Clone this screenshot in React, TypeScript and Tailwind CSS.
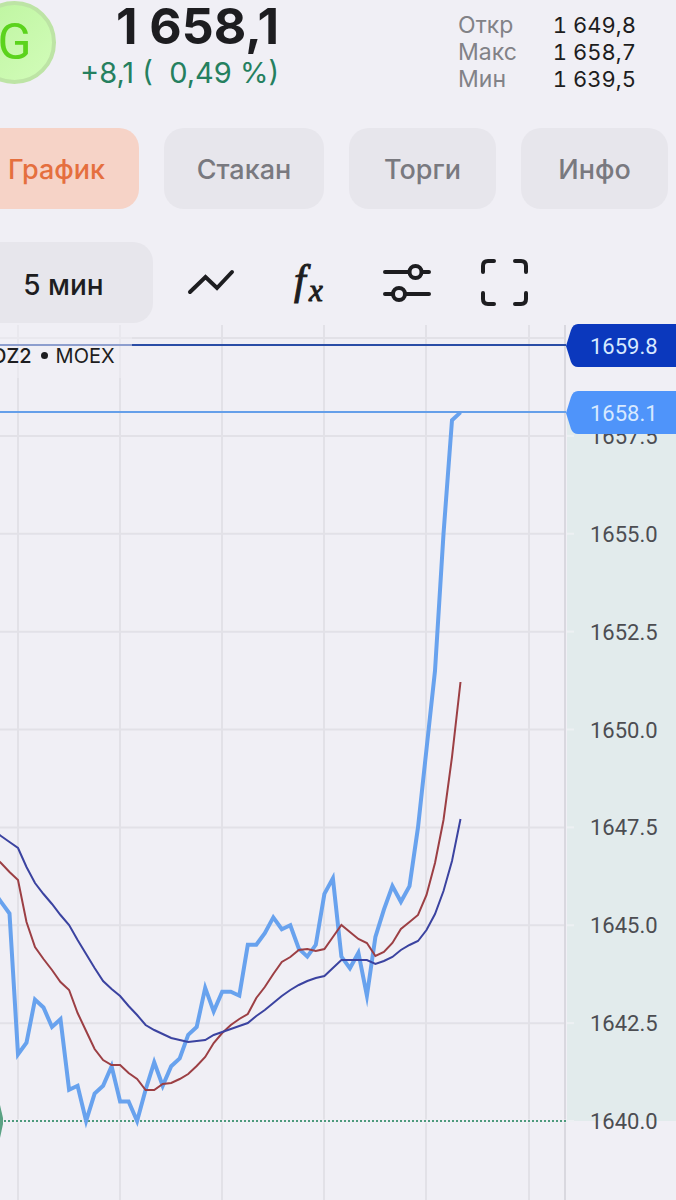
import clsx from "clsx";

const TABS = [
  { label: "График", width: "w-[165px]", active: true },
  { label: "Стакан", width: "w-[160px]" },
  { label: "Торги", width: "w-[147px]" },
  { label: "Инфо", width: "w-[147px]" },
];

const DAY_STATS = [
  { label: "Откр", value: "1 649,8" },
  { label: "Макс", value: "1 658,7" },
  { label: "Мин", value: "1 639,5" },
];

const PRICE_TICKS = [1657.5, 1655, 1652.5, 1650, 1647.5, 1645, 1642.5, 1640];
const TIME_TICKS = [18, 120, 222, 324, 426, 529];

// 5 minute closes
const CLOSES = [
  1645.9, 1645.6, 1645.3, 1641.7, 1642.0, 1643.1, 1642.9, 1642.4, 1642.6, 1640.8, 1640.9, 1640.0,
  1640.7, 1640.9, 1641.4, 1640.5, 1640.5, 1640.0, 1640.8, 1641.5, 1640.9, 1641.4, 1641.6, 1642.2,
  1642.4, 1643.4, 1642.8, 1643.3, 1643.3, 1643.2, 1644.5, 1644.5, 1644.8, 1645.2, 1644.9, 1645.0,
  1644.4, 1644.2, 1644.5, 1645.8, 1646.2, 1644.2, 1643.9, 1644.3, 1643.2, 1644.7, 1645.4, 1646.0,
  1645.6, 1646.0, 1647.5, 1649.5, 1651.5, 1655.0, 1657.9, 1658.1,
];

// Moving averages, already in chart coordinates
const FAST_MA = [
  855, 863, 872, 880, 922, 947, 959, 970, 982, 990, 1013, 1031, 1049, 1060, 1065, 1065, 1073, 1079,
  1090, 1090, 1084, 1083, 1079, 1074, 1066, 1057, 1043, 1033, 1025, 1019, 1014, 998, 987, 974, 962,
  957, 950, 949, 951, 949, 937, 925, 932, 939, 943, 956, 952, 943, 929, 922, 915, 895, 863, 820,
  757, 682,
];
const SLOW_MA = [
  830, 836, 842, 848, 867, 883, 894, 904, 915, 925, 940, 954, 968, 981, 989, 996, 1006, 1015, 1025,
  1030, 1034, 1038, 1040, 1042, 1041, 1040, 1035, 1032, 1029, 1026, 1023, 1016, 1010, 1003, 996,
  990, 985, 981, 978, 976, 968, 960, 960, 960, 960, 964, 961, 957, 950, 945, 941, 930, 914, 891,
  861, 819,
];

const priceY = (price: number) => 1121 - (price - 1640) * 39.15;

function toPoints(ys: number[]) {
  return ys.map((y, i) => `${(18 + (i - 3) * 8.51).toFixed(1)},${y.toFixed(1)}`).join(" ");
}

function Header() {
  return (
    <header className="flex h-32 items-start">
      <div className="-ml-[27px] mt-px flex size-[83px] shrink-0 items-center justify-center rounded-full border-4 border-[#bde4a5] bg-linear-to-br from-[#bdf59f] to-[#d2fcb9] font-['Roboto',sans-serif] text-[50px] text-[#5bd31c]">
        G
      </div>
      <div className="ml-6 flex flex-col items-end whitespace-nowrap">
        <h1 className="text-[50px] font-bold leading-[52px] text-[#1d1d20]">1 658,1</h1>
        <p className="whitespace-pre text-[29px] leading-[42px] text-[#25805f]">+8,1 (  0,49 %)</p>
      </div>
      <dl className="ml-auto mr-10 mt-3 grid grid-cols-[auto_auto] gap-x-9 whitespace-nowrap text-[23px] leading-[27px]">
        {DAY_STATS.map((s) => (
          <div key={s.label} className="contents">
            <dt className="text-[#828287]">{s.label}</dt>
            <dd className="text-[22px] tabular-nums text-[#1d1d20]">{s.value}</dd>
          </div>
        ))}
      </dl>
    </header>
  );
}

function Tabs() {
  return (
    <nav className="-ml-[26px] flex gap-[25px]">
      {TABS.map((tab) => (
        <button
          key={tab.label}
          type="button"
          className={clsx(
            "h-[81px] shrink-0 rounded-[20px] pt-1 text-[27px] font-medium",
            tab.width,
            tab.active ? "bg-[#f6d3c7] text-[#e56f3e]" : "bg-[#e7e6ec] text-[#79797f]",
          )}
        >
          {tab.label}
        </button>
      ))}
    </nav>
  );
}

const ICON = "h-[60px] w-[60px]";

function Toolbar() {
  return (
    <div className="-ml-[26px] mt-[33px] flex items-center text-[#1d1d20]">
      <button
        type="button"
        className="h-[81px] w-[179px] shrink-0 rounded-[20px] bg-[#e7e6ec] pt-1 text-[28px] font-medium"
      >
        5 мин
      </button>
      <div className="ml-7 flex gap-[37px]">
        <button type="button" aria-label="Тип графика">
          <svg viewBox="0 0 60 60" className={ICON} fill="none" stroke="currentColor" strokeWidth="4" strokeLinecap="round">
            <path d="M9 39L24.500 24L36 35L51 19" strokeLinejoin="miter" />
          </svg>
        </button>
        <button
          type="button"
          aria-label="Индикаторы"
          className="h-[60px] w-[60px] font-['Liberation_Serif',serif] italic"
        >
          <svg viewBox="0 0 60 60" className={ICON} fill="currentColor" stroke="currentColor" strokeWidth="1">
            <text x="16" y="41" fontSize="42">f</text>
            <text x="31" y="48" fontSize="31">x</text>
          </svg>
        </button>
        <button type="button" aria-label="Настройки">
          <svg viewBox="0 0 60 60" className={ICON} fill="none" stroke="currentColor" strokeWidth="4" strokeLinecap="round">
            <path d="M10 19H34M48 19H54M10 41H17M31 41H54" />
            <circle cx="40.500" cy="19" r="6" />
            <circle cx="24" cy="41" r="6" />
          </svg>
        </button>
        <button type="button" aria-label="На весь экран">
          <svg viewBox="0 0 60 60" className={ICON} fill="none" stroke="currentColor" strokeWidth="4" strokeLinecap="round">
            <path d="M11 19V13Q11 8 16 8H22M43 8H49Q54 8 54 13V19M54 40V46Q54 51 49 51H43M22 51H16Q11 51 11 46V40" />
          </svg>
        </button>
      </div>
    </div>
  );
}

function Plot() {
  return (
    <svg
      viewBox="0 323 566 877"
      preserveAspectRatio="xMaxYMin slice"
      className="h-[877px] min-w-0 flex-1"
      fill="none"
    >
      <g stroke="#e2e1e7" strokeWidth="2">
        {TIME_TICKS.map((x) => (
          <line key={x} x1={x} x2={x} y1="325" y2="1200" />
        ))}
        {[1660, ...PRICE_TICKS].map((p) => (
          <line key={p} x1="-1000" x2="565" y1={priceY(p)} y2={priceY(p)} />
        ))}
      </g>
      <line x1="565" x2="565" y1="325" y2="1200" stroke="#d9d8df" strokeWidth="2" />
      <line x1="-1000" x2="566" y1="1121" y2="1121" stroke="#f0eff5" strokeWidth="3" />
      <line x1="-1000" x2="566" y1="1121" y2="1121" stroke="#4c9a7c" strokeWidth="2" strokeDasharray="2 2" />
      <path d="M-20 1105H0L3 1118V1124L0 1138H-20Z" fill="#5aa183" />
      <polyline points={toPoints(CLOSES.map(priceY))} stroke="#68a2ee" strokeWidth="4" strokeMiterlimit="12" />
      <polyline points={toPoints(FAST_MA)} stroke="#9c3f44" strokeWidth="2" />
      <polyline points={toPoints(SLOW_MA)} stroke="#3b43a0" strokeWidth="2" />
      <line x1="-1000" x2="567" y1="345" y2="345" stroke="#2a4da6" strokeWidth="2" />
      <line x1="-1000" x2="567" y1="412" y2="412" stroke="#659fe9" strokeWidth="2" />
    </svg>
  );
}

function PriceTag({ y, price, color }: { y: number; price: string; color: string }) {
  return (
    <g transform={`translate(0 ${y})`}>
      <path d="M0 0L5 -16Q7 -22 12 -22H300V21H12Q7 21 5 16Z" fill={color} />
      <text x="24" y="8" fill="#d7e9ff">
        {price}
      </text>
    </g>
  );
}

function PriceAxis() {
  return (
    <svg
      viewBox="566 323 110 877"
      className="h-[877px] w-[110px] shrink-0 font-['Roboto',sans-serif] text-[22px]"
    >
      <rect x="567" y="412" width="109" height="709" fill="#e2ebec" />
      {PRICE_TICKS.map((p) => (
        <g key={p}>
          <line x1="567" x2="574" y1={priceY(p)} y2={priceY(p)} stroke="#edf0f3" strokeWidth="2" />
          <text x="590" y={priceY(p) + 8} fill="#4c4d52">
            {p.toFixed(1)}
          </text>
        </g>
      ))}
      <g transform="translate(566 0)">
        <PriceTag y={346} price="1659.8" color="#0b38bd" />
        <PriceTag y={413} price="1658.1" color="#4f94fa" />
      </g>
    </svg>
  );
}

export default function App() {
  return (
    <main className="min-h-screen overflow-hidden bg-[#f0eff5] font-['Inter',sans-serif]">
      <Header />
      <Tabs />
      <Toolbar />
      <section className="relative flex">
        <Plot />
        <PriceAxis />
        <div className="absolute left-0 top-0 flex h-[55px] w-[132px] items-center gap-2 overflow-hidden bg-[#f0eff5]/50 pt-2.5 text-xl text-[#1d1d20]">
          <span className="-ml-2 font-medium">DZ2</span>
          <span className="ml-px size-[7px] rounded-full bg-[#1d1d20]" />
          <span>MOEX</span>
        </div>
      </section>
    </main>
  );
}
